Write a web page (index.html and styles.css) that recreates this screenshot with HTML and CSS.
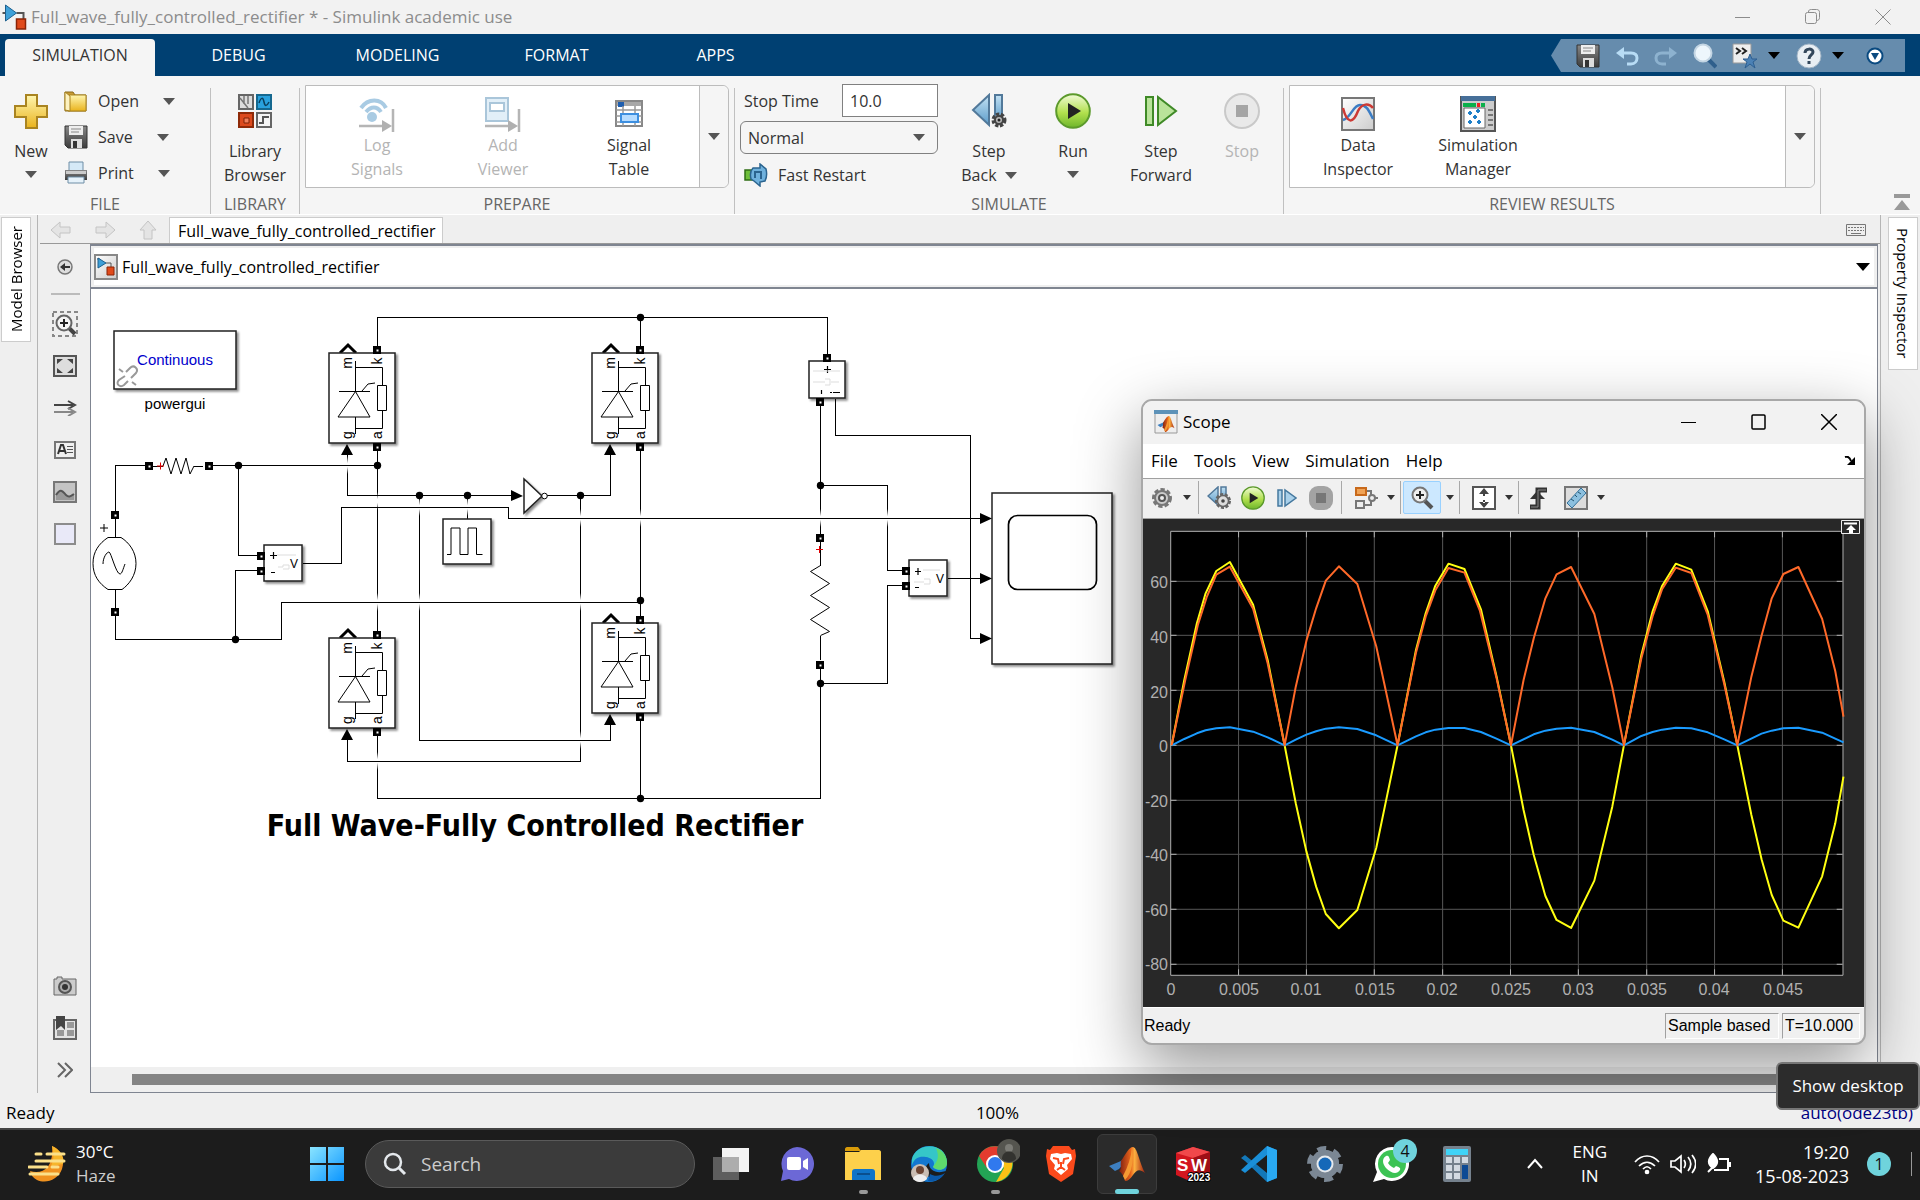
FILE: index.html
```html
<!DOCTYPE html>
<html lang="en">
<head>
<meta charset="utf-8">
<title>Full_wave_fully_controlled_rectifier * - Simulink academic use</title>
<link rel="stylesheet" href="styles.css">
</head>
<body>
<svg class="sprite" aria-hidden="true">
  <defs>
    <linearGradient id="gold" x2="0" y2="1"><stop offset="0" stop-color="#fff6b0"/><stop offset="1" stop-color="#e9b31d"/></linearGradient>
    <linearGradient id="steel" x2="0" y2="1"><stop offset="0" stop-color="#888"/><stop offset="1" stop-color="#3c3c3c"/></linearGradient>
    <linearGradient id="blue" x2="0" y2="1"><stop offset="0" stop-color="#c4e2f4"/><stop offset="1" stop-color="#5b9bc9"/></linearGradient>
    <linearGradient id="green" x2="0" y2="1"><stop offset="0" stop-color="#f1fbd8"/><stop offset=".55" stop-color="#b2e04e"/><stop offset="1" stop-color="#6db52b"/></linearGradient>
    <linearGradient id="paper" x2="1" y2="1"><stop offset="0" stop-color="#fff"/><stop offset="1" stop-color="#ccc"/></linearGradient>
    <linearGradient id="fade" x2="0" y2="1"><stop offset="0" stop-color="#fff" stop-opacity="0"/><stop offset=".4" stop-color="#fff"/><stop offset=".6" stop-color="#fff"/><stop offset="1" stop-color="#fff" stop-opacity="0"/></linearGradient>
    <linearGradient id="win" x2="1" y2="1"><stop offset="0" stop-color="#8ae4ff"/><stop offset="1" stop-color="#0a95ff"/></linearGradient>
    <linearGradient id="flame" x2="1" y2="0"><stop offset="0" stop-color="#7a1d10"/><stop offset=".45" stop-color="#e8641b"/><stop offset=".6" stop-color="#fbb040"/><stop offset="1" stop-color="#a3200f"/></linearGradient>
    <filter id="shadow" x="-20%" y="-20%" width="150%" height="150%"><feDropShadow dx="2" dy="2" stdDeviation="1" flood-color="#000" flood-opacity=".45"/></filter>
  </defs>
  <symbol id="i-save" viewBox="0 0 24 24"><path d="M1 1h22v22H4l-3-3z" fill="url(#steel)" stroke="#333"/><path d="M5 1h14v9H5z" fill="#eee"/><path d="M7 4h10M7 7h8" stroke="#888"/><path d="M7 14h11v9H7z" fill="#ddd"/><path d="M9 16h4v7H9z" fill="#333"/></symbol>
  <symbol id="i-model" viewBox="0 0 24 26"><path d="M0 9h4M14 9h7v7" fill="none" stroke="#555" stroke-width="2"/><path d="M3 1l11 8L3 17z" fill="#3ea0d8" stroke="#1d5f8d"/><path d="M14 15h9v10h-9z" fill="#e04a1b" stroke="#8b2407" stroke-width="1.5"/></symbol>
  <symbol id="i-run" viewBox="0 0 36 36"><circle cx="18" cy="18" r="16.8" fill="url(#green)" stroke="#5c9a2c" stroke-width="2"/><path d="M13 10l13 8-13 8z" fill="#222"/></symbol>
  <symbol id="i-matlab" viewBox="0 0 36 34"><path d="M0 19l12-5 6-5c-2 5-5 10-8 13l-4 2z" fill="#3d7fc0"/><path d="M12 14C16 8 20 0 24 0c4 0 6 14 12 26-5-4-8-4-12 2-3 4-5 6-8 6-1-5-3-8-6-10 3-2 1-6 2-10z" fill="url(#flame)"/><path d="M23 1c-1 9-4 19-9 28l2 4c7-6 9-21 7-32z" fill="#f59a33"/></symbol>
  <symbol id="i-back" viewBox="0 0 36 36"><path d="M18 2v30L2 17z" fill="url(#blue)" stroke="#52799a" stroke-width="2"/><path d="M24 2h7v26h-7z" fill="url(#blue)" stroke="#52799a" stroke-width="2"/><circle cx="28" cy="27" r="5.500" fill="#aaa" stroke="#444" stroke-width="4" stroke-dasharray="3 1.500"/><circle cx="28" cy="27" r="4" fill="#bbb" stroke="#444" stroke-width="2"/><circle cx="28" cy="27" r="1.500" fill="#222"/></symbol>
  <symbol id="i-back-small" viewBox="0 0 24 24"><path d="M11 1v18L1 10z" fill="url(#blue)" stroke="#52799a" stroke-width="1.500"/><path d="M14 1h5v14h-5z" fill="url(#blue)" stroke="#52799a" stroke-width="1.500"/><circle cx="16" cy="15" r="6.500" fill="#bbb" stroke="#666" stroke-width="3" stroke-dasharray="3 1.500"/><circle cx="16" cy="15" r="5.500" fill="#ddd" stroke="#666" stroke-width="1.500"/><circle cx="16" cy="15" r="1.800" fill="#444"/></symbol>
  <symbol id="i-lens" viewBox="0 0 24 24"><path d="M15 15l7 7" stroke="#555" stroke-width="4"/><circle cx="10" cy="9" r="7.500" fill="#eee" stroke="#777" stroke-width="2"/><path d="M10 5v8M6 9h8" stroke="#222" stroke-width="2"/></symbol>
  <symbol id="port" viewBox="0 0 8 8"><path d="M0 0h8v8H0z" fill="#000"/><path d="M3 3h3v3H3z" fill="#fff"/></symbol>
</svg>

<header class="titlebar">
  <svg class="title-icon"><use href="#i-model"/></svg>
  <h1>Full_wave_fully_controlled_rectifier * - Simulink academic use</h1>
  <div class="win-controls">
    <button aria-label="Minimize"><svg width="16" height="16"><path d="M0 8.500h15" stroke="#8c8c8c"/></svg></button>
    <button aria-label="Restore"><svg width="16" height="16" fill="none" stroke="#8c8c8c"><rect x=".5" y="3.500" width="11" height="11" rx="2"/><path d="M3.500 3c0-2 1-2.500 3-2.500h5c2 0 3 1 3 3v5c0 2-1 3-3 3"/></svg></button>
    <button aria-label="Close"><svg width="16" height="16"><path d="M.5.5l15 15M15.500.5l-15 15" stroke="#8c8c8c"/></svg></button>
  </div>
</header>

<nav class="ribbon-tabs">
  <button class="rtab active">SIMULATION</button>
  <button class="rtab">DEBUG</button>
  <button class="rtab">MODELING</button>
  <button class="rtab">FORMAT</button>
  <button class="rtab">APPS</button>
  <div class="quick">
    <button aria-label="Save"><svg width="24" height="24"><use href="#i-save"/></svg></button>
    <button aria-label="Undo"><svg width="24" height="24" fill="none"><path d="M5 9h11c4 0 6 2 6 5s-2 6-6 6h-4" stroke="#b8dcf5" stroke-width="3"/><path d="M9 3v12L1 9z" fill="#b8dcf5"/></svg></button>
    <button aria-label="Redo"><svg width="24" height="24" fill="none"><path d="M19 9H8c-4 0-6 2-6 5s2 6 6 6h4" stroke="#8db2cf" stroke-width="3"/><path d="M15 3v12l8-6z" fill="#8db2cf"/></svg></button>
    <button aria-label="Search"><svg width="24" height="26"><path d="M14 15l9 9" stroke="#2f5f8c" stroke-width="4"/><circle cx="10" cy="10" r="8.500" fill="#edf6fc" stroke="#c3d5e3" stroke-width="2"/></svg></button>
    <button aria-label="Shortcuts"><svg width="26" height="26"><path d="M1 1h18v19H1z" fill="#eee" stroke="#999"/><path d="M4 5l4 3-4 3M10 5l4 3-4 3" fill="none" stroke="#222" stroke-width="2"/><path d="M18 11l2 5h5l-4 3 2 6-5-4-5 4 2-6-4-3h5z" fill="#4b81b5" stroke="#2e5f91"/></svg></button>
    <span class="tri black"></span>
    <button aria-label="Help"><svg width="26" height="26"><circle cx="13" cy="13" r="12" fill="#e8eef3" stroke="#9fb3c4"/><path d="M9 10c0-5 8-5 8-1 0 3-4 3-4 7M13 18v3" fill="none" stroke="#33475b" stroke-width="3"/></svg></button>
    <span class="tri black"></span>
    <button class="q-last" aria-label="Minimize toolstrip"><svg width="18" height="18"><circle cx="9" cy="9" r="7.500" fill="#fff" stroke="#0a4a80" stroke-width="2"/><path d="M5 6h8l-4 7z" fill="#0a4a80"/></svg></button>
  </div>
</nav>

<section class="toolstrip">
  <div class="group g-file">
    <div class="content">
      <button class="big w62"><svg width="34" height="36"><path d="M12 2h11v11h10v11H23v11H12V24H1V13h11z" fill="url(#gold)" stroke="#a98421" stroke-width="2"/></svg><span>New</span><i class="tri"></i></button>
      <div class="rows">
        <button class="row r-open"><svg width="24" height="24"><path d="M1 3h8l2 3h11v16H1z" fill="#c79a35" stroke="#8b6a1b"/><path d="M4 6h18v16H4z" fill="url(#gold)" stroke="#a98421"/><path d="M1 3l5 4v15l-5-1z" fill="#fdf2c0" stroke="#a98421"/></svg><span>Open</span><i class="tri"></i></button>
        <button class="row"><svg width="24" height="24"><use href="#i-save"/></svg><span>Save</span><i class="tri"></i></button>
        <button class="row"><svg width="24" height="24"><path d="M5 1h14v9H5z" fill="#d5e9f7" stroke="#6f8ea6"/><path d="M1 9h22v10H1z" fill="url(#steel)"/><path d="M2 10h20v3H2z" fill="#ccc"/><path d="M4 16h16v6H4z" fill="#e6f2fa" stroke="#6f8ea6"/></svg><span>Print</span><i class="tri"></i></button>
      </div>
    </div>
    <h2>FILE</h2>
  </div>
  <span class="sep"></span>
  <div class="group g-lib">
    <div class="content">
      <button class="big w88"><svg width="34" height="36"><path d="M1 2h14v14H1z" fill="#ddd" stroke="#666" stroke-width="2"/><path d="M6 3v8M10 3v8M2 5l8 10" stroke="#777" stroke-width="1.500"/><path d="M19 2h14v14H19z" fill="#29a1dd" stroke="#15688f" stroke-width="2"/><path d="M21 10c2-6 4-6 5-1s3 4 5 0" fill="none" stroke="#0b3f5c" stroke-width="1.500"/><path d="M1 20h14v14H1z" fill="#dc4a1d" stroke="#8e2a08" stroke-width="2"/><path d="M6 25h5v5H6z" fill="#f2805c" stroke="#7d2206"/><path d="M19 20h14v14H19z" fill="#f4f4f4" stroke="#666" stroke-width="2"/><path d="M21 30h4v-6h6" fill="none" stroke="#555" stroke-width="2"/></svg><span>Library<br>Browser</span></button>
    </div>
    <h2>LIBRARY</h2>
  </div>
  <span class="sep"></span>
  <div class="group g-prep">
    <div class="content">
      <div class="gallery">
        <button class="gal w126" disabled><svg width="36" height="36"><path d="M2 12c7-10 20-10 25 0M7 16c5-6 11-6 15 0" fill="none" stroke="#a9cbe3" stroke-width="4"/><circle cx="13" cy="21" r="5" fill="#a9cbe3"/><path d="M0 30h24M34 13v23" stroke="#b5b5b5" stroke-width="2.500"/><path d="M23 24v12l10-6z" fill="#b0b0b0"/></svg><span>Log<br>Signals</span></button>
        <button class="gal w126" disabled><svg width="36" height="36"><path d="M1 2h22v23H1z" fill="#e2eff8" stroke="#aac6da" stroke-width="2"/><path d="M5 7h14v8H5z" fill="#fff" stroke="#aac6da" stroke-width="2"/><path d="M0 30h24M34 13v23" stroke="#b5b5b5" stroke-width="2.500"/><path d="M23 24v12l10-6z" fill="#b0b0b0"/></svg><span>Add<br>Viewer</span></button>
        <button class="gal w126"><svg width="28" height="36"><path d="M1 5h26v25H1z" fill="#fff" stroke="#888" stroke-width="2"/><path d="M2 6h24v4H2z" fill="#a8a8a8"/><path d="M3 6h6v5H3z" fill="#1f5fb0"/><path d="M1 14h26M1 20h26M1 26h26M8 10v20M20 10v20" stroke="#999" stroke-width="1.500"/><path d="M6 18h17v8H6z" fill="#b6dcff" stroke="#3d8fe0" stroke-width="2"/></svg><span>Signal<br>Table</span></button>
        <button class="expand push" aria-label="More"><i class="tri"></i></button>
      </div>
    </div>
    <h2>PREPARE</h2>
  </div>
  <span class="sep"></span>
  <div class="group g-sim">
    <div class="content">
      <div class="form">
        <div class="field"><label for="stop">Stop Time</label><input id="stop" type="text" value="10.0"></div>
        <div class="select-wrap"><select aria-label="Simulation mode"><option>Normal</option></select><i class="tri"></i></div>
        <button class="fast"><svg width="24" height="24"><path d="M1 7h8v10H1z" fill="#6fbf3a" stroke="#2f6d14" stroke-width="1.500"/><path d="M9 5h7V1l6 5c1 4 1 8-1 12l-5 1v4l-6-5-3-2c-1-4-1-8 2-11z" fill="#6fb1dd" stroke="#2b648f" stroke-width="1.500"/><path d="M11 15V9h6v7" fill="none" stroke="#2b648f" stroke-width="2"/></svg><span>Fast Restart</span></button>
      </div>
      <button class="big w98"><svg width="36" height="36"><use href="#i-back"/></svg><span>Step<br>Back <i class="tri"></i></span></button>
      <button class="big w70"><svg width="36" height="36"><use href="#i-run"/></svg><span>Run</span><i class="tri"></i></button>
      <button class="big w106"><svg width="34" height="36"><path d="M2 4h7v28H2zM14 4v28l18-14z" fill="#b9e39a" stroke="#3f8a27" stroke-width="2"/></svg><span>Step<br>Forward</span></button>
      <button class="big w56" disabled><svg width="36" height="36"><circle cx="18" cy="18" r="17" fill="#e9e9e9" stroke="#c9c9c9" stroke-width="2"/><path d="M12 12h12v12H12z" fill="#a5a5a5"/></svg><span>Stop</span></button>
    </div>
    <h2>SIMULATE</h2>
  </div>
  <span class="sep"></span>
  <div class="group g-rev">
    <div class="content">
      <div class="gallery">
        <button class="gal w120 lead"><svg width="34" height="36"><path d="M1 2h32v32H1z" fill="url(#paper)" stroke="#777" stroke-width="2"/><path d="M2 24C10 22 12 9 19 9s9 6 13 14" fill="none" stroke="#3c7dc4" stroke-width="2.500"/><path d="M2 12c4 16 10 16 15 3 4-8 11-8 15-3" fill="none" stroke="#cc3a35" stroke-width="2.500"/></svg><span>Data<br>Inspector</span></button>
        <button class="gal w120"><svg width="36" height="36"><path d="M1 1h34v34H1z" fill="#ccc" stroke="#555" stroke-width="2"/><path d="M1 0h34v5H1z" fill="#466f99"/><path d="M3 7h13v4H3z" fill="#0ab04a"/><path d="M17 7h3v4h-3z" fill="#e22"/><path d="M21 7h4v4h-4z" fill="#0ab04a"/><path d="M4 12h21v20H4z" fill="#fff" stroke="#666"/><path d="M28 14h5M28 19h5M28 24h5M28 29h5" stroke="#777" stroke-width="2"/><path d="M8 17h4M16 15h4M13 21h4M8 26h4M17 26h4M10 15v4M18 13v4M15 19v4M10 24v4M19 24v4" stroke="#1e7fc8" stroke-width="2"/></svg><span>Simulation<br>Manager</span></button>
        <button class="expand push" aria-label="More"><i class="tri"></i></button>
      </div>
    </div>
    <h2>REVIEW RESULTS</h2>
  </div>
  <span class="sep"></span>
  <button class="collapse" aria-label="Collapse toolstrip"><svg width="16" height="18"><path d="M0 0h16v4H0zM8 6l8 10H0z" fill="#999"/></svg></button>
</section>

<main class="work">
  <aside class="gutter left"><button class="side-tab">Model Browser</button></aside>
  <div class="editor">
    <div class="doc-tabs">
      <button aria-label="Back"><svg width="22" height="20"><path d="M1 10l9-8v5h10v6H10v5z" fill="#e4e4e4" stroke="#c4c4c4"/></svg></button>
      <button aria-label="Forward"><svg width="22" height="20"><path d="M21 10l-9-8v5H2v6h10v5z" fill="#e4e4e4" stroke="#c4c4c4"/></svg></button>
      <button aria-label="Up"><svg width="20" height="20"><path d="M10 1l8 9h-4v9H6v-9H2z" fill="#e4e4e4" stroke="#c4c4c4"/></svg></button>
      <button class="doc-tab">Full_wave_fully_controlled_rectifier</button>
      <svg class="keyboard" width="20" height="12"><path d="M.5.5h19v11H.5z" fill="#eee" stroke="#777"/><path d="M2 3.500h16M2 6.500h16" stroke="#777" stroke-dasharray="2 1"/><path d="M5 9.500h10" stroke="#777"/></svg>
    </div>
    <div class="editor-body">
      <div class="palette">
        <button class="p-back" aria-label="Hide browser"><svg width="18" height="18"><circle cx="9" cy="9" r="7" fill="#ddd" stroke="#777" stroke-width="1.500"/><path d="M4 9l5-4v3h5v2H9v3z" fill="#333"/></svg></button>
        <hr>
        <button aria-label="Zoom"><svg width="26" height="26"><path d="M1 1h24v24H1z" fill="none" stroke="#888" stroke-width="2" stroke-dasharray="4 3"/><path d="M16 16l7 7" stroke="#444" stroke-width="4"/><circle cx="12" cy="12" r="7.500" fill="#f4f4f4" stroke="#666" stroke-width="2"/><path d="M12 8v8M8 12h8" stroke="#222" stroke-width="2"/></svg></button>
        <button aria-label="Fit to view"><svg width="24" height="22"><path d="M1 1h22v20H1z" fill="#ddd" stroke="#555" stroke-width="2"/><path d="M4 4h6L4 9zM20 4h-6l6 5zM4 18h6l-6-5zM20 18h-6l6-5z" fill="#444"/></svg></button>
        <button aria-label="Show signals"><svg width="24" height="16" fill="none"><path d="M1 5h19" stroke="#444" stroke-width="2"/><path d="M1 12h19" stroke="#888" stroke-width="2"/><path d="M15 1l7 4-7 4" stroke="#444" stroke-width="2"/><path d="M15 8l7 4-7 4" stroke="#888" stroke-width="2"/></svg></button>
        <button aria-label="Annotation"><svg width="22" height="18"><path d="M1 1h20v16H1z" fill="#f0f0f0" stroke="#777" stroke-width="2"/><path d="M4 13l3-9h2l3 9M5 10h6" fill="none" stroke="#333" stroke-width="2"/><path d="M13 5.500h6M13 8.500h6M13 11.500h6" stroke="#555"/></svg></button>
        <button aria-label="Image"><svg width="24" height="22"><path d="M1 1h22v20H1z" fill="#c4c4c4" stroke="#777" stroke-width="2"/><path d="M3 14c5-8 7-3 10 0s5 1 8-1v6H3z" fill="#999"/><path d="M3 14c5-8 7-3 10 0s5 1 8-1" fill="none" stroke="#555" stroke-width="2"/></svg></button>
        <button aria-label="Area"><svg width="22" height="22"><path d="M1 1h20v20H1z" fill="#e9e9f8" stroke="#8c8c8c" stroke-width="2"/></svg></button>
        <button class="p-camera" aria-label="Screenshot"><svg width="24" height="20"><path d="M1 3h3V1h5v2h14v16H1z" fill="#ccc" stroke="#666"/><circle cx="12" cy="11" r="6" fill="#aaa" stroke="#555" stroke-width="2"/><circle cx="12" cy="11" r="3" fill="#333"/></svg></button>
        <button aria-label="Library"><svg width="24" height="24"><path d="M1 4h22v19H1z" fill="#e4e4e4" stroke="#666" stroke-width="2"/><path d="M14 6h7v6h-7zM14 14h7v6h-7zM4 14h7v6H4z" fill="#999"/><path d="M3 0h9v14l-4-4-5 4z" fill="#444"/></svg></button>
        <button aria-label="More"><svg width="16" height="16"><path d="M1 1l7 7-7 7M8 1l7 7-7 7" fill="none" stroke="#666" stroke-width="2"/></svg></button>
      </div>
      <div class="view">
        <div class="crumb"><svg width="24" height="26"><path d="M1 1h22v24H1z" fill="url(#paper)" stroke="#888" stroke-width="2"/><path d="M3 5h3M12 9h5v5" fill="none" stroke="#555"/><path d="M4 4l8 5-8 5z" fill="#3ea0d8" stroke="#1d5f8d"/><path d="M13 13h7v8h-7z" fill="#e04a1b" stroke="#8b2407"/></svg><span>Full_wave_fully_controlled_rectifier</span><i class="tri black"></i></div>
        <div class="canvas">
          <svg class="diagram" width="1030" height="580" viewBox="91 289 1030 580" font-family="'Liberation Sans', Arial, sans-serif" font-size="15" fill="none" stroke="#000">
            <defs>
              <g id="thyristor">
                <path d="M340 353l8-8 8 8" stroke-width="3"/>
                <rect x="329" y="353" width="66" height="90" fill="#fff" stroke-width="1.500" stroke="#222" filter="url(#shadow)"/>
                <path d="M355.500 361v30M355.500 417v17M355.500 367.500h27v18M382.500 411v17.500h-27M377.500 385.500h9v25h-9zM339 391.500h31M362 391l6-7 7-1M355.500 391.500L338 417h32z"/>
                <use href="#port" x="373" y="346" width="8" height="8"/><use href="#port" x="373" y="443" width="8" height="8"/>
                <path d="M347 444l6 11h-12z" fill="#000" stroke="none"/>
                <g fill="#000" stroke="none" font-size="14" text-anchor="middle">
                  <text transform="translate(352 363) rotate(-90)">m</text><text transform="translate(382 361) rotate(-90)">k</text>
                  <text transform="translate(352 435) rotate(-90)">g</text><text transform="translate(382 435) rotate(-90)">a</text>
                </g>
              </g>
              <rect id="gap" x="-2" y="-9" width="4" height="18" fill="url(#fade)" stroke="none"/>
              <circle id="dot" r="3.700" fill="#000" stroke="none"/>
            </defs>
            <g class="crisp">
              <path d="M377.500 447v184M347.500 455v40.500M419.500 495.500v245h191V725M580.500 495.500v266h-233V740M640.500 317v32M640.500 447v170M467.500 495v24M377.500 730v68.500h443V668M640.500 718v80M820.500 402v135M820.500 485.500h67v85h18M835.500 399v36.500h135v203H980M377.500 350v-32.500h450V358"/>
            </g>
            <use href="#gap" x="377.500" y="501"/><use href="#gap" x="377.500" y="602"/><use href="#gap" x="347.500" y="465"/><use href="#gap" x="419.500" y="507"/><use href="#gap" x="419.500" y="602"/><use href="#gap" x="467.500" y="507"/><use href="#gap" x="580.500" y="518"/><use href="#gap" x="580.500" y="602"/><use href="#gap" x="580.500" y="740"/><use href="#gap" x="640.500" y="518"/><use href="#gap" x="820.500" y="518"/><use href="#gap" x="887.500" y="518"/><use href="#gap" x="377.500" y="761"/>
            <g class="crisp">
              <path d="M115.500 514v-48.500H148M208 465.500h169M238.500 466v89.500h24M262 570.500h-26.500v69M115.500 612v27.500h166v-37h359M303 563.500h38.500v-56h167v11H982M347.500 495.500H515M547 495.500h63.500V455M905 585.500h-17.500v98h-67M948 578.500h36M419 740.500h191.500M347 761.500h233M115.500 519v18M115.500 590v18M153 466.500h10M194 466.500h9M820.500 542v24M820.500 636v24"/>
            </g>
            <path d="M163 466l3-8 5 16 5-16 5 16 5-16 4 16 4-8M820.500 565.500l-10 6 19 12-19 12 19 12-19 12 19 12-9 4"/>
            <path d="M157 466h7M160.500 462.500v7M816 549.500h7M819.500 546v7" stroke="#e00000"/>
            <path d="M108 537.500h13c8 5 15 14 15 26s-7 21-14 26h-14c-9-6-15-14-15-26s6-20 15-26zM103 564c0-7 4-12 6-12s7 22 11 22c2 0 3-5 5-10M100 528h8M104 524v8"/>
            <g filter="url(#shadow)" fill="#fff" stroke="#222" stroke-width="1.500"><rect x="114" y="331" width="122" height="58"/><rect x="264" y="545" width="38" height="36"/><rect x="443" y="519" width="48" height="45"/><rect x="809" y="361" width="36" height="37"/><rect x="909" y="560" width="38" height="36"/><rect x="992" y="493" width="120" height="171"/><path d="M524 479v34l18-17z"/></g>
            <circle cx="544.500" cy="496" r="2.800" fill="#fff"/>
            <rect x="1008.500" y="515.500" width="88" height="74" rx="9" stroke-width="1.700"/>
            <path d="M447 554.500h4V528h9v26.500h8V528h8.500v26.500h6"/>
            <path d="M511 490v11l12-5zM980 513v11l12-5.500zM980 573v11l12-5.500zM980 633v11l12-5.500z" fill="#000" stroke="none"/>
            <path d="M270 555.500h7M273.500 552v7M271 572.500h4M915 571.500h6M918 568v7M915 587.500h4M824 369.500h7M827.500 366v7M821.500 390v4M830 392.500h2M833 392.500h7" stroke-width="1.200"/>
            <path d="M277 555h19M278 567h5v-2h6v4h-6M813 371h27M813 382h12M825 379h5v6h-5M831 382h8M923 570h17M914 582h10M924 579h6v5h-6" stroke="#ddd"/>
            <g fill="#000" stroke="none" text-anchor="middle"><text x="294" y="568" font-size="12">V</text><text x="940" y="583" font-size="12">V</text><text x="175" y="409">powergui</text><text x="175" y="365" fill="#0000cc">Continuous</text></g>
            <path d="M126 372l4-4c4-4 9 1 6 5l-5 5M125 376l-6 4c-4 4 1 8 5 5l4-4M119 369l4 3M132 382l4 3" stroke="#999" stroke-width="2"/>
            <use href="#thyristor"/><use href="#thyristor" x="263"/><use href="#thyristor" y="285"/><use href="#thyristor" x="263" y="270"/>
            <use href="#port" x="145" y="462" width="8" height="8"/><use href="#port" x="205" y="462" width="8" height="8"/><use href="#port" x="111" y="511" width="8" height="8"/><use href="#port" x="111" y="608" width="8" height="8"/><use href="#port" x="257" y="552" width="8" height="8"/><use href="#port" x="257" y="567" width="8" height="8"/><use href="#port" x="823" y="354" width="8" height="8"/><use href="#port" x="816" y="398" width="8" height="8"/><use href="#port" x="816" y="534" width="8" height="8"/><use href="#port" x="816" y="661" width="8" height="8"/><use href="#port" x="902" y="567" width="8" height="8"/><use href="#port" x="902" y="582" width="8" height="8"/>
            <use href="#dot" x="640.500" y="317.500"/><use href="#dot" x="377.500" y="465.500"/><use href="#dot" x="238.500" y="465.500"/><use href="#dot" x="235.500" y="639.500"/><use href="#dot" x="419.500" y="495.500"/><use href="#dot" x="467.500" y="495.500"/><use href="#dot" x="580.500" y="495.500"/><use href="#dot" x="640.500" y="600.500"/><use href="#dot" x="640.500" y="798.500"/><use href="#dot" x="820.500" y="485.500"/><use href="#dot" x="820.500" y="683.500"/>
            <text class="caption" x="535" y="836" text-anchor="middle">Full Wave-Fully Controlled Rectifier</text>
          </svg>
        </div>
        <div class="hscroll"><div class="thumb"></div></div>
      </div>
    </div>
  </div>
  <aside class="gutter right"><button class="side-tab">Property Inspector</button></aside>

  <section class="scope" aria-label="Scope">
    <header class="scope-title">
      <svg width="24" height="24"><path d="M1 1h22v22H1z" fill="#eee" stroke="#999"/><path d="M0 0h24v4H0z" fill="#5d92b8"/><use href="#i-matlab" x="3" y="6" width="18" height="16"/></svg>
      <h2>Scope</h2>
      <div class="win-controls">
        <button aria-label="Minimize"><svg width="16" height="16"><path d="M0 8.500h15" stroke="#000"/></svg></button>
        <button aria-label="Maximize"><svg width="16" height="16"><rect x="1" y="1" width="13" height="14" rx="1" fill="none" stroke="#000" stroke-width="1.500"/></svg></button>
        <button aria-label="Close"><svg width="16" height="16"><path d="M0 0l16 16M16 0L0 16" stroke="#000" stroke-width="1.500"/></svg></button>
      </div>
    </header>
    <nav class="scope-menu"><button>File</button><button>Tools</button><button>View</button><button>Simulation</button><button>Help</button><svg width="12" height="10"><path d="M1 1c3-1 5 1 6 4" fill="none" stroke="#000" stroke-width="2"/><path d="M11 1v8H3z"/></svg></nav>
    <div class="scope-tools">
      <button class="t-gear" aria-label="Settings"><svg width="22" height="22"><circle cx="11" cy="11" r="8" fill="#ccc" stroke="#777" stroke-width="4" stroke-dasharray="4 2"/><circle cx="11" cy="11" r="7" fill="#ccc" stroke="#777" stroke-width="2"/><circle cx="11" cy="11" r="3" fill="#eee" stroke="#555" stroke-width="2"/></svg><i class="tri small"></i></button>
      <span class="vsep"></span>
      <button class="t-icon t-first" aria-label="Step back"><svg width="24" height="24"><use href="#i-back-small"/></svg></button>
      <button class="t-icon" aria-label="Run"><svg width="24" height="24"><use href="#i-run"/></svg></button>
      <button class="t-icon" aria-label="Step forward"><svg width="20" height="20"><path d="M1 2h4v16H1zM8 2v16l11-8z" fill="#a9d0ea" stroke="#45789e" stroke-width="1.500"/></svg></button>
      <button class="t-icon" aria-label="Stop"><svg width="24" height="24"><rect width="24" height="24" rx="9" fill="#a3a3a3"/><path d="M7 7h10v10H7z" fill="#777"/></svg></button>
      <span class="vsep"></span>
      <button class="t-menu" aria-label="Model"><svg width="24" height="24" fill="none" stroke-width="2"><path d="M13 5h4v4M9 19h8v-4" stroke="#777"/><path d="M2 2h10v7H2z" fill="#f0a356" stroke="#c8691b"/><path d="M2 15h8v7H2z" fill="#eee" stroke="#777"/><circle cx="18" cy="12" r="3" fill="#eee" stroke="#777"/><path d="M21 12h3" stroke="#777"/></svg><i class="tri small"></i></button>
      <span class="vsep"></span>
      <button class="t-menu" aria-label="Zoom"><span class="hot"><svg width="24" height="24"><use href="#i-lens"/></svg></span><i class="tri small"></i></button>
      <span class="vsep"></span>
      <button class="t-menu" aria-label="Scale axes"><svg width="24" height="24"><path d="M1 1h22v22H1z" fill="#fff" stroke="#555" stroke-width="2"/><path d="M12 2l5 6H7zM12 22l5-6H7zM11 7h2v3h-2zM11 14h2v3h-2z" fill="#444"/></svg><i class="tri small"></i></button>
      <span class="vsep"></span>
      <button class="t-icon t-trigger" aria-label="Triggers"><svg width="22" height="24"><path d="M2 21h8V4h9" fill="none" stroke="#333" stroke-width="5"/><path d="M9 5l8 8H2z" fill="#333"/><path d="M3 21h7V4h8" fill="none" stroke="#888"/></svg></button>
      <button class="t-wide" aria-label="Measurements"><svg width="24" height="24"><path d="M1 1h22v22H1z" fill="#ddd" stroke="#777" stroke-width="2"/><path d="M3 17L17 2l5 5L8 22z" fill="#8cc0df" stroke="#35729b"/><path d="M7 13l3 2M11 9l2 2M14 6l3 2" stroke="#23546f"/></svg><i class="tri small"></i></button>
    </div>
    <svg class="plot" viewBox="1143 519 721 488" font-family="'Liberation Sans', Arial, sans-serif" font-size="16">
      <rect x="1143" y="519" width="721" height="488" fill="#282828"/>
      <g transform="translate(1130 540) scale(.4847 .3333)" fill="none" stroke-width="1">
        <rect x="84" y="-26" width="1387" height="1332" fill="#000"/>
        <path class="ns" stroke="#575757" d="M224-26V1306M364-26V1306M504-26V1306M645-26V1306M785-26V1306M925-26V1306M1066-26V1306M1206-26V1306M1346-26V1306M84 124H1470M84 286H1470M84 451H1470M84 616H1470M84 781H1470M84 943H1470M84 1108H1470M84 1273H1470"/>
        <rect class="ns" x="84" y="-26" width="1387" height="1332" stroke="#b0b0b0"/>
        <path class="ns" stroke="#b0b0b0" d="M224 1306v-18M364 1306v-18M504 1306v-18M645 1306v-18M785 1306v-18M925 1306v-18M1066 1306v-18M1206 1306v-18M1346 1306v-18M224-26v18M364-26v18M504-26v18M645-26v18M785-26v18M925-26v18M1066-26v18M1206-26v18M1346-26v18M84 124h12M84 286h12M84 451h12M84 616h12M84 781h12M84 943h12M84 1108h12M84 1273h12M1470 124h-12M1470 286h-12M1470 451h-12M1470 616h-12M1470 781h-12M1470 943h-12M1470 1108h-12M1470 1273h-12"/>
        <g stroke-linejoin="round">
        <path class="ns curve" stroke="#ffff11" d="M86 616L112 420 138 250 156 160 178 93 206 66 254 194 284 360 319 616 342 790 364 935 384 1040 404 1122 431 1165 469 1110 508 924 530 770 552 616 590 330 610 220 630 137 657 71 690 87 724 208 756 408 786 616 812 810 833 945 857 1068 880 1140 910 1164 958 1022 995 800 1019 616 1055 345 1078 215 1098 137 1126 71 1158 89 1192 214 1226 425 1253 616 1282 825 1303 958 1324 1065 1348 1142 1379 1163 1428 1009 1455 850 1472 710"/>
        <path class="ns curve" stroke="#1a9bff" d="M86 616L112 597 138 580 156 571 178 565 206 562 254 575 284 592 319 616 342 599 364 584 384 574 404 566 431 562 469 567 508 586 552 616 590 589 610 577 630 569 657 564 690 564 724 576 756 596 786 616 833 583 857 572 880 566 910 563 958 576 995 599 1019 616 1055 588 1078 576 1098 569 1126 563 1158 565 1192 577 1226 598 1253 616 1303 581 1324 572 1348 565 1379 563 1428 578 1455 596 1472 607"/>
        <path class="ns curve" stroke="#ff6929" d="M86 616L114 420 140 255 158 172 178 104 206 80 254 206 284 370 319 616 342 440 364 302 384 205 404 122 431 79 469 132 508 319 552 616 590 338 610 230 630 151 657 84 690 98 722 213 756 413 786 616 812 420 833 295 857 175 880 103 910 81 958 222 995 442 1019 616 1055 355 1078 230 1098 147 1126 83 1158 99 1192 225 1226 432 1253 616 1282 410 1303 287 1324 175 1348 102 1379 81 1428 237 1455 393 1472 530"/>
        </g>
      </g>
      <g fill="#b0b0b0" text-anchor="end"><text x="1168" y="588">60</text><text x="1168" y="643">40</text><text x="1168" y="698">20</text><text x="1168" y="752">0</text><text x="1168" y="807">-20</text><text x="1168" y="861">-40</text><text x="1168" y="916">-60</text><text x="1168" y="970">-80</text></g>
      <g fill="#b0b0b0" text-anchor="middle"><text x="1171" y="995">0</text><text x="1239" y="995">0.005</text><text x="1306" y="995">0.01</text><text x="1375" y="995">0.015</text><text x="1442" y="995">0.02</text><text x="1511" y="995">0.025</text><text x="1578" y="995">0.03</text><text x="1647" y="995">0.035</text><text x="1714" y="995">0.04</text><text x="1783" y="995">0.045</text></g>
      <path d="M1841.500 520.500h18v13h-18z" fill="#282828" stroke="#eee"/><path d="M1844 523.500h13" stroke="#fff" stroke-width="2"/><path d="M1851 525l5 5h-3v3h-4v-3h-3z" fill="#fff"/>
    </svg>
    <footer class="scope-status"><span class="grow">Ready</span><span class="cell c1">Sample based</span><span class="cell c2">T=10.000</span></footer>
  </section>
</main>

<footer class="statusbar"><span>Ready</span><span class="zoomlevel">100%</span><a href="#solver">auto(ode23tb)</a><div class="tip" role="tooltip">Show desktop</div></footer>

<nav class="taskbar">
  <button class="weather"><svg width="38" height="38"><path d="M24 1c10 4 13 14 10 23-4 11-16 15-25 11-4-2-6-5-7-9 14 4 24-5 22-25z" fill="#f0921f"/><path d="M24 1c9 4 13 12 11 18l-12 2c3-6 3-12 1-20z" fill="#f6b62c"/><path d="M8 9h5M19 9h17M8 16h28M1 22h18M24 22h6M2 29h28" stroke="#fbe08a" stroke-width="3" stroke-linecap="round"/></svg><span>30°C<br><em>Haze</em></span></button>
  <button class="start" aria-label="Start"><svg width="36" height="36"><path d="M1 1h16v16H1zM19 1h16v16H19zM1 19h16v16H1zM19 19h16v16H19z" fill="url(#win)"/></svg></button>
  <button class="search"><svg width="24" height="24"><circle cx="10" cy="10" r="8" fill="none" stroke="#e4e8ec" stroke-width="2.500"/><path d="M16 16l6 6" stroke="#e4e8ec" stroke-width="3"/></svg><span>Search</span></button>
  <div class="apps">
    <button aria-label="Task view"><svg width="36" height="36"><path d="M0 11h26v23H0z" fill="#5e5e5e"/><path d="M9 2h27v24H9z" fill="#f3f3f3"/><path d="M9 11h17v15H9z" fill="#adadad"/></svg></button>
    <button aria-label="Chat"><svg width="36" height="36"><path d="M18 1a17 17 0 1 1-8 32l-8 2 2-10A17 17 0 0 1 18 1z" fill="#6c68d6"/><rect x="8" y="11" width="14" height="13" rx="2" fill="#fff"/><path d="M24 15l5-3v12l-5-3z" fill="#fff"/></svg></button>
    <button class="open" aria-label="Explorer"><svg width="36" height="36"><path d="M0 3c0-1 1-2 2-2h11l3 4H0z" fill="#d99b09"/><path d="M0 6h14l2-2h18c1 0 2 1 2 2v28H0z" fill="#fdd04b"/><path d="M7 34V26c0-2 1-3 3-3h17c2 0 3 1 3 3v8z" fill="#0f74c8"/><path d="M12 28h13" stroke="#0a4f8e" stroke-width="2"/></svg></button>
    <button aria-label="Edge"><svg width="38" height="38"><circle cx="19" cy="19" r="18" fill="#1377cf"/><path d="M2 14C6-3 36-4 37 17c0 8-10 10-14 5 3-5-1-9-7-10S5 12 2 20z" fill="#35c6c8"/><path d="M26 3c8 3 11 9 11 15 0 7-9 9-14 4 4-6 7-9 3-19z" fill="#5fdb6c"/><path d="M19 18c0 8 8 11 17 8-3 9-14 10-19 4-3-4-2-9 2-12z" fill="#1c1c1c"/><path d="M20 29c5 3 10 2 15-1-4 7-12 9-17 8z" fill="#0b58a8"/><circle cx="10" cy="28" r="9" fill="#c9bdb3"/><circle cx="10" cy="25" r="4" fill="#6b4332"/><path d="M3 34c1-6 13-6 14 0-4 4-10 4-14 0z" fill="#eee"/></svg></button>
    <button class="open" aria-label="Chrome"><svg width="44" height="44" class="chrome"><circle cx="19" cy="25" r="18" fill="#23a455"/><path d="M3 17A18 18 0 0 1 35 17H19l-8 12z" fill="#e33b2e"/><path d="M35 17c4 9 0 23-15 26l8-14-9-12z" fill="#fbc116"/><circle cx="19" cy="25" r="9" fill="#fff"/><circle cx="19" cy="25" r="7" fill="#3079ee"/><circle cx="33" cy="12" r="12" fill="#55554f"/><circle cx="33" cy="9" r="4" fill="#7c7c76"/><path d="M26 20c0-10 14-10 14 0-4 4-10 4-14 0z" fill="#33332f"/></svg></button>
    <button aria-label="Brave"><svg width="32" height="38"><path d="M8 1h16l3 4 3-1 1 7-3 18-12 8-12-8L1 11l1-7 3 1z" fill="#fb4a1c"/><path d="M6 9l6-1 4 1 4-1 6 1 1 5-5 6 1 4-7 6-7-6 1-4-5-6z" fill="#fff"/><path d="M8 13l5 1 1 5M24 13l-5 1-1 5M16 17v6M12 25l4-3 4 3" fill="none" stroke="#fb4a1c" stroke-width="2"/></svg></button>
    <button class="current" aria-label="MATLAB"><svg width="36" height="36"><use href="#i-matlab"/></svg></button>
    <button aria-label="SolidWorks"><svg width="36" height="36"><path d="M1 7L18 1l17 5v22l-18 8L1 29z" fill="#d3161f"/><path d="M1 7L18 1l17 5-17 6z" fill="#f0484b"/><path d="M18 12v24l17-8V6z" fill="#9e0f16"/><g fill="#fff" font-family="'Liberation Sans', Arial, sans-serif" font-weight="bold"><text x="2" y="25" font-size="17">S</text><text x="16" y="25" font-size="17">W</text><text x="13" y="35" font-size="10" stroke="#000" stroke-width="2" paint-order="stroke">2023</text></g></svg></button>
    <button aria-label="VS Code"><svg width="36" height="36"><path d="M26 0l10 4v28l-10 4L4 15 0 12l4-3 22 18z" fill="#1378b9"/><path d="M26 0L0 24l4 3L26 9z" fill="#1a8fd8"/><path d="M26 0l10 4v28l-10 4z" fill="#29a9f2"/></svg></button>
    <button aria-label="Settings"><svg width="36" height="36"><circle cx="18" cy="18" r="14" fill="#7b8794" stroke="#7b8794" stroke-width="8" stroke-dasharray="8 6.660"/><circle cx="18" cy="18" r="14" fill="#7b8794"/><circle cx="18" cy="18" r="8.500" fill="#e6eaee"/><circle cx="18" cy="18" r="6.500" fill="#1668b8"/></svg></button>
    <button aria-label="WhatsApp"><svg width="36" height="36"><path d="M19 1a17 17 0 1 1-8 32L0 36l4-10A17 17 0 0 1 19 1z" fill="#fff"/><circle cx="19" cy="18" r="14" fill="#3cc354"/><path d="M13 10c2-1 3 0 4 4l-2 3c2 3 4 4 6 5l2-2c3 1 5 2 4 4-3 5-9 3-13-1s-6-10-1-13z" fill="#fff"/></svg><b class="badge">4</b></button>
    <button aria-label="Calculator"><svg width="28" height="36"><rect width="28" height="36" rx="2" fill="#75818d"/><path d="M3 3h22v6H3z" fill="#3fd3f7"/><path d="M3 11h6v6H3zM11 11h6v6h-6zM19 11h6v6h-6zM3 19h6v6H3zM11 19h6v6h-6zM3 27h6v6H3zM11 27h6v6h-6z" fill="#d3dae2"/><path d="M19 19h6v14h-6z" fill="#0d4a94"/></svg></button>
  </div>
  <div class="tray">
    <button aria-label="Hidden icons"><svg width="18" height="12"><path d="M2 10l7-8 7 8" fill="none" stroke="#fff" stroke-width="2"/></svg></button>
    <button class="lang">ENG<br>IN</button>
    <button class="status-icons" aria-label="Network, volume, battery">
      <svg width="26" height="22" fill="none" stroke="#fff" stroke-width="1.700"><path d="M1 9c7-8 17-8 24 0M5 13c5-5 11-5 16 0M9 16c3-3 5-3 8 0"/><circle cx="13" cy="19" r="1.500" fill="#fff"/></svg>
      <svg width="26" height="22" fill="none" stroke="#fff" stroke-width="1.700"><path d="M1 8h4l6-5v16l-6-5H1zM14 7c2 3 2 5 0 8M18 4c4 5 4 9 0 14M22 2c5 6 5 12 0 18"/></svg>
      <svg width="26" height="22" fill="none" stroke="#fff" stroke-width="2"><path d="M13 6h9v11H8M24 9v5"/><path d="M7 1c5 5 6 10 0 14-6-4-5-9 0-14z" fill="#fff"/><path d="M2 19l5-5"/></svg>
    </button>
    <button class="clock">19:20<br>15-08-2023</button>
    <b class="notify">1</b>
    <span class="peek"></span>
  </div>
</nav>
</body>
</html>
```

FILE: styles.css
```css
* { box-sizing: border-box; }
body { margin: 0; height: 100vh; display: flex; flex-direction: column; overflow: hidden; font: 16px/24px "Open Sans", "Noto Sans", sans-serif; color: #111; background: #f0f0f0; }
button { border: 0; padding: 0; margin: 0; background: none; font: inherit; color: inherit; }
svg { display: block; flex: none; }
h1, h2 { margin: 0; font-weight: 400; font-size: inherit; }
.sprite { position: absolute; width: 0; height: 0; }
.tri { display: inline-block; flex: none; width: 0; height: 0; border: 6px solid transparent; border-top: 7px solid #555; border-bottom: 0; }
.tri.black { border-top-color: #000; }
.tri.small { border-width: 5px 4px 0; border-top-color: #333; }

.titlebar { display: flex; align-items: center; height: 34px; flex: none; background: #f2f2f2; padding: 0 2px; color: #8c8c8c; }
.title-icon { width: 25px; height: 26px; }
.titlebar h1 { margin-left: 4px; font-size: 17px; }
.win-controls { display: flex; margin-left: auto; }
.win-controls button { width: 70px; height: 32px; display: grid; place-items: center; }

.ribbon-tabs { display: flex; height: 42px; flex: none; background: #004072; padding: 5px 15px 0 5px; color: #fff; }
.rtab { width: 159px; padding-bottom: 6px; }
.rtab.active { width: 150px; margin-right: 4px; background: #f5f5f5; color: #333; border-radius: 4px 4px 0 0; }
.quick { display: flex; align-items: center; gap: 15px; height: 33px; margin-left: auto; padding: 0 21px 0 25px; background: #668cad; clip-path: polygon(10px 0, 100% 0, 100% 100%, 10px 100%, 0 50%); }
.quick .tri { margin: 0 1px 0 -5px; }
.quick .q-last { margin-left: 6px; }

.toolstrip { display: flex; height: 139px; flex: none; background: #f5f5f5; padding-top: 7px; border-bottom: 1px solid #fff; color: #333; }
.group { display: flex; flex-direction: column; }
.content { display: flex; flex: 1; }
.group h2 { height: 22px; line-height: 24px; text-align: center; color: #666; }
.sep { width: 1px; margin-top: 5px; background: #c0c0c0; }
.g-file { width: 210px; }
.g-lib { width: 88px; }
.g-prep { width: 434px; }
.g-sim { width: 548px; }
.g-rev { width: 536px; }
.big { display: flex; flex-direction: column; align-items: center; padding-top: 10px; }
.big svg { margin-bottom: 10px; }
.big > .tri { margin-top: 8px; }
.big .tri { vertical-align: 2px; }
.big span .tri { margin-left: 4px; }
button:disabled { color: #b4b4b4; }
.w56 { width: 56px; } .w62 { width: 62px; } .w70 { width: 70px; } .w88 { width: 88px; } .w98 { width: 98px; } .w106 { width: 106px; } .w120 { width: 120px; } .w126 { width: 126px; }
.rows { padding-left: 2px; }
.row { display: flex; align-items: center; height: 36px; gap: 10px; }
.row .tri { margin-left: 14px; }
.gallery { display: flex; flex: 1; height: 103px; margin: 2px 5px 0; background: #fff; border: 1px solid #bcbcbc; border-radius: 0 6px 6px 0; padding-left: 8px; }
.gal { display: flex; flex-direction: column; align-items: center; padding-top: 10px; }
.gal svg { margin-bottom: 1px; }
.expand { width: 29px; background: #f5f5f5; border-left: 1px solid #bcbcbc; border-radius: 0 6px 6px 0; display: grid; place-items: center; }
.push { margin-left: auto; }
.form { width: 198px; margin: 1px 2px 0 5px; display: flex; flex-direction: column; gap: 4px; }
.field { display: flex; align-items: center; justify-content: space-between; padding-left: 4px; }
.field input { width: 96px; height: 33px; border: 1px solid #808080; padding: 0 7px; font: inherit; color: inherit; background: #fff; }
.select-wrap { position: relative; }
.select-wrap select { display: block; appearance: none; width: 100%; height: 33px; border: 1px solid #808080; border-radius: 6px; background: #f5f5f5; font: inherit; color: inherit; padding: 0 7px; }
.select-wrap .tri { position: absolute; right: 13px; top: 13px; }
.fast { display: flex; align-items: center; gap: 10px; height: 34px; padding-left: 4px; }
.collapse { margin: auto 10px 2px auto; }

.work { position: relative; flex: 1; min-height: 0; display: flex; background: #efefef; }
.gutter { flex: none; padding-top: 2px; }
.gutter.left { width: 38px; border-right: 1px solid #b5b5b5; padding-left: 1px; }
.gutter.right { width: 40px; border-left: 1px solid #b5b5b5; padding-left: 7px; }
.side-tab { writing-mode: vertical-rl; width: 30px; background: #fff; border: 1px solid #ccc; color: #000; font-size: 15px; line-height: 28px; }
.left .side-tab { transform: rotate(180deg); height: 125px; }
.right .side-tab { height: 153px; }
.editor { flex: 1; min-width: 0; display: flex; flex-direction: column; padding-left: 2px; }
.doc-tabs { display: flex; align-items: center; height: 29px; flex: none; border-bottom: 1px solid #999; padding: 2px 14px 0 10px; gap: 22px; color: #000; }
.doc-tab { align-self: stretch; background: #fff; border: 1px solid #ccc; border-bottom: 0; padding: 0 7px 0 8px; margin-left: -11px; }
.keyboard { margin-left: auto; }
.editor-body { flex: 1; min-height: 0; display: flex; padding-right: 2px; }
.palette { width: 50px; flex: none; display: flex; flex-direction: column; align-items: center; padding-bottom: 2px; }
.palette button { height: 42px; width: 30px; display: grid; place-items: center; flex: none; }
.palette .p-back { height: 46px; }
.palette hr { width: 29px; height: 2px; margin: 3px 0 8px; border: 0; background: #bbb; }
.palette .p-camera { margin-top: auto; }
.view { flex: 1; min-width: 0; display: flex; flex-direction: column; border: 1px solid #7f8591; border-top-width: 2px; }
.crumb { display: flex; align-items: center; gap: 4px; height: 41px; flex: none; background: #fff; border: solid #efefef; border-width: 2px 3px; padding: 0 4px 0 0; color: #000; box-shadow: 0 2px #7f8591; margin-bottom: 2px; }
.crumb .tri { margin-left: auto; border-width: 8px 7px 0; }
.canvas { flex: 1; min-height: 0; background: #fff; overflow: hidden; }
.crisp { shape-rendering: crispEdges; }
.caption { font: 700 30px "DejaVu Sans Condensed", "Open Sans", sans-serif; fill: #000; stroke: none; }
.hscroll { height: 25px; flex: none; padding: 7px 40px 7px 41px; background: #efefef; }
.thumb { height: 11px; background: #848484; }

.scope { position: absolute; right: 54px; top: 184px; width: 725px; height: 646px; display: flex; flex-direction: column; border: 2px solid #a8a8a8; border-radius: 11px; overflow: hidden; background: #f0f0f0; color: #000; font-size: 17px; box-shadow: 0 22px 65px rgba(0, 0, 0, .42); }
.scope-title { display: flex; align-items: center; gap: 5px; height: 43px; flex: none; background: #f2f2f2; padding: 0 0 2px 11px; }
.scope-menu { display: flex; align-items: center; gap: 16px; height: 35px; flex: none; background: #fff; padding: 0 8px; border-bottom: 1px solid #a0a0a0; }
.scope-menu svg { margin-left: auto; }
.scope-tools { display: flex; align-items: center; height: 40px; flex: none; padding: 0 0 2px 8px; border-bottom: 1px solid #a0a0a0; }
.scope-tools button { display: flex; align-items: center; gap: 9px; }
.scope-tools .t-gear { width: 47px; gap: 10px; }
.t-icon { width: 34px; justify-content: center; }
.t-first { margin-left: 3px; }
.t-first ~ .t-menu { margin-left: 0; }
.t-trigger { margin-left: 3px; }
.t-wide { width: 56px; justify-content: center; }
.t-menu { width: 58px; justify-content: flex-end; padding-right: 5px; }
.t-icon + .vsep { margin-left: 3px; }
.hot { display: grid; place-items: center; width: 38px; height: 33px; background: #cce8ff; border: 1px solid #99d1ff; margin-right: -4px; border-radius: 2px; }
.vsep { width: 1px; height: 33px; background: #a8a8a8; }
.plot { width: 100%; flex: 1; min-height: 0; }
.ns { vector-effect: non-scaling-stroke; }
.curve { stroke-width: 2px; }
.scope-status { display: flex; height: 36px; flex: none; border-top: 1px solid #fff; font: 16px/26px "Liberation Sans", Arial, sans-serif; padding: 5px 4px 4px 1px; gap: 3px; }
.grow { flex: 1; }
.cell { border: 1px solid #fff; border-top-color: #a0a0a0; border-left-color: #a0a0a0; padding-left: 2px; line-height: 24px; }
.c1 { width: 114px; }
.c2 { width: 78px; }

.statusbar { position: relative; display: grid; grid-template-columns: 1fr auto 1fr; align-items: center; height: 35px; flex: none; background: #efefef; padding: 4px 7px 0 6px; color: #000; font-size: 17px; }
.statusbar a { color: #00007f; text-decoration: none; text-align: right; }
.zoomlevel { padding-left: 76px; }
.tip { position: absolute; right: 0; bottom: 18px; width: 144px; height: 48px; background: #2c2c2c; color: #fff; border: 2px solid #777; border-radius: 6px; text-align: center; line-height: 43px; }

.taskbar { display: flex; align-items: center; height: 72px; flex: none; background: #1c1c1c; border-top: 2px solid #444; color: #fff; padding: 0 0 2px 28px; font-size: 17px; }
.weather { display: flex; align-items: center; gap: 10px; width: 281px; text-align: left; }
.weather em { font-style: normal; color: #ccc; }
.start { width: 38px; }
.search { display: flex; align-items: center; gap: 14px; width: 330px; height: 48px; margin-left: 18px; padding-left: 17px; background: #3b3b3b; border: 1px solid #5a5a5a; border-radius: 24px; font-size: 19px; color: #ccc; }
.apps { display: flex; margin-left: 3px; }
.apps button { position: relative; width: 66px; height: 62px; display: grid; place-items: center; }
.chrome { margin: -6px 0 0 6px; }
.open::after { content: ""; position: absolute; bottom: 1px; width: 9px; height: 4px; border-radius: 2px; background: #999; }
.current::before { content: ""; position: absolute; z-index: -1; inset: 1px 3px; background: #2b2b2b; border: 1px solid #3c3c3c; border-radius: 6px; }
.apps .current { z-index: 0; }
.current::after { content: ""; position: absolute; bottom: 1px; width: 24px; height: 5px; border-radius: 3px; background: #6fd3dc; }
.badge, .notify { display: grid; place-items: center; width: 24px; height: 24px; border-radius: 12px; background: #6fd3dc; color: #111; font-weight: 400; font-size: 16px; }
.badge { position: absolute; right: 7px; top: 6px; }
.tray { display: flex; align-items: center; margin-left: auto; }
.lang { margin-left: 28px; text-align: center; }
.status-icons { display: flex; gap: 10px; margin-left: 27px; }
.clock { margin-left: 23px; text-align: right; font-size: 18px; }
.notify { margin-left: 18px; }
.peek { width: 1px; height: 24px; margin: 0 8px 0 20px; background: #999; }
```
